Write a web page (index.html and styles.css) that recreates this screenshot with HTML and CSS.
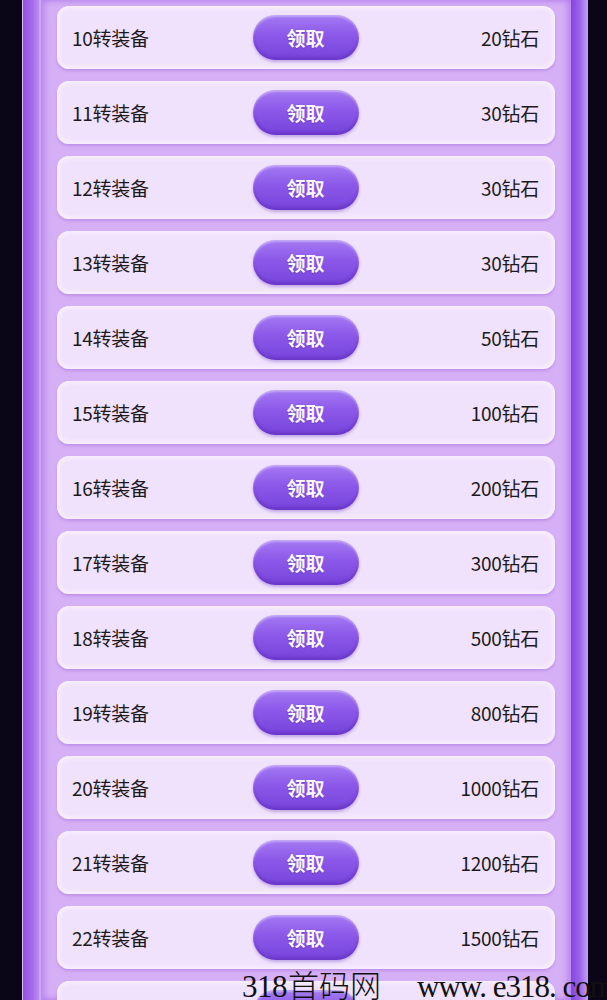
FILE: index.html
```html
<!DOCTYPE html>
<html lang="zh">
<head>
<meta charset="utf-8">
<link rel="stylesheet" href="styles.css">
</head>
<body>
<div class="page">
  <div class="frame">
    <div class="rail-left"></div>
    <div class="panel">
      <div class="card"><span class="label">10转装备</span><button class="btn">领取</button><span class="amount">20钻石</span></div>
      <div class="card"><span class="label">11转装备</span><button class="btn">领取</button><span class="amount">30钻石</span></div>
      <div class="card"><span class="label">12转装备</span><button class="btn">领取</button><span class="amount">30钻石</span></div>
      <div class="card"><span class="label">13转装备</span><button class="btn">领取</button><span class="amount">30钻石</span></div>
      <div class="card"><span class="label">14转装备</span><button class="btn">领取</button><span class="amount">50钻石</span></div>
      <div class="card"><span class="label">15转装备</span><button class="btn">领取</button><span class="amount">100钻石</span></div>
      <div class="card"><span class="label">16转装备</span><button class="btn">领取</button><span class="amount">200钻石</span></div>
      <div class="card"><span class="label">17转装备</span><button class="btn">领取</button><span class="amount">300钻石</span></div>
      <div class="card"><span class="label">18转装备</span><button class="btn">领取</button><span class="amount">500钻石</span></div>
      <div class="card"><span class="label">19转装备</span><button class="btn">领取</button><span class="amount">800钻石</span></div>
      <div class="card"><span class="label">20转装备</span><button class="btn">领取</button><span class="amount">1000钻石</span></div>
      <div class="card"><span class="label">21转装备</span><button class="btn">领取</button><span class="amount">1200钻石</span></div>
      <div class="card"><span class="label">22转装备</span><button class="btn">领取</button><span class="amount">1500钻石</span></div>
      <div class="card"><span class="label">23转装备</span><button class="btn">领取</button><span class="amount">2000钻石</span></div>
    </div>
    <div class="rail-right"></div>
  </div>
  <div class="watermark"><span class="wm-num">318</span><span class="wm-cn">首码网</span><span class="wm-url">www. e318. com</span></div>
</div>
</body>
</html>
```

FILE: styles.css
```css
html, body {
  margin: 0;
  padding: 0;
}
body {
  width: 607px;
  height: 1000px;
  overflow: hidden;
  background: #0a0517;
  font-family: "Noto Sans CJK SC", "Noto Sans", sans-serif;
}
.page {
  position: relative;
  width: 607px;
  height: 1000px;
  overflow: hidden;
  background: #0a0517;
}
.frame {
  display: flex;
  margin-left: 22px;
  width: 566px;
  height: 1000px;
}
.rail-left {
  width: 16px;
  border-left: 1px solid #d9c2f2;
  border-right: 2px solid #cfa6f6;
  background: linear-gradient(90deg, #9250e4 0%, #a56ceb 60%, #bb8cf2 100%);
}
.rail-right {
  width: 17px;
  background: linear-gradient(90deg, #8545de 0%, #9a62e8 50%, #c4a0f4 100%);
}
.panel {
  flex: 1;
  display: flex;
  flex-direction: column;
  gap: 12px;
  padding: 6px 16px 0 16px;
  background: #d6b0f6;
  box-shadow: inset 4px 0 6px rgba(165, 105, 235, 0.55), inset -4px 0 6px rgba(165, 105, 235, 0.55);
}
.card {
  flex: 0 0 63px;
  display: grid;
  grid-template-columns: 1fr 106px 1fr;
  align-items: center;
  padding: 0 16px 0 15px;
  border-radius: 12px;
  background: #f0e1fc;
  box-shadow: inset 0 0 5px 2px rgba(250, 244, 255, 0.9), 0 2px 3px rgba(150, 90, 210, 0.35);
}
.label {
  font-size: 19px;
  color: #1c1a20;
  justify-self: start;
  letter-spacing: -0.3px;
}
.amount {
  font-size: 19px;
  color: #1c1a20;
  justify-self: end;
  letter-spacing: -0.3px;
}
.btn {
  height: 45px;
  width: 106px;
  border: none;
  border-radius: 23px;
  padding: 0;
  font-family: "Noto Sans CJK SC", sans-serif;
  font-size: 19px;
  font-weight: 700;
  color: #fbf6ff;
  background: linear-gradient(180deg, #a57af3 0%, #8b58e9 45%, #7744dc 100%);
  box-shadow: inset 0 2px 2px rgba(255, 255, 255, 0.35), inset 0 -3px 3px rgba(90, 40, 180, 0.45), 0 2px 3px rgba(110, 60, 190, 0.35);
  text-shadow: 0 1px 1px rgba(80, 30, 160, 0.4);
}
.watermark {
  position: absolute;
  left: 242px;
  top: 962px;
  white-space: nowrap;
  font-size: 31px;
  line-height: 44px;
  color: #111;
}
.wm-num {
  font-family: "Liberation Serif", serif;
  letter-spacing: -0.5px;
}
.wm-cn {
  font-family: "Noto Sans CJK SC", sans-serif;
  font-weight: 300;
  margin-left: 1px;
}
.wm-url {
  font-family: "Liberation Serif", serif;
  margin-left: 36px;
  letter-spacing: -1px;
}
```
